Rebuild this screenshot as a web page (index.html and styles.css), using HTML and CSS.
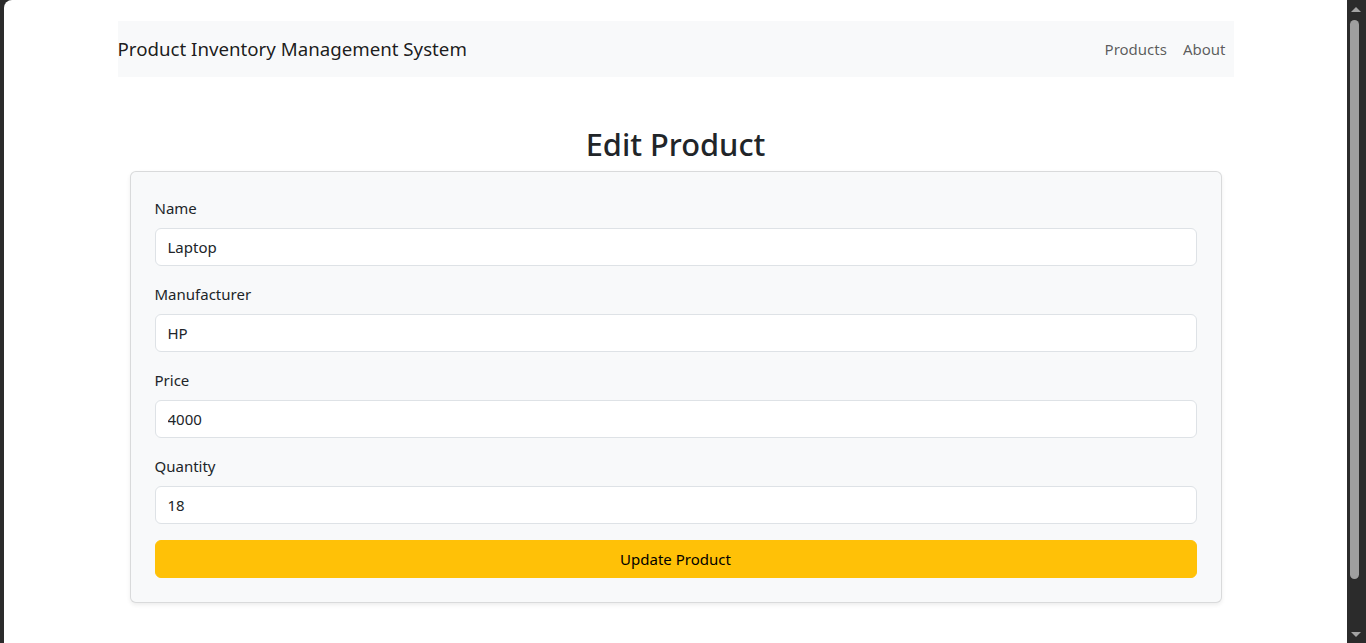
FILE: index.html
```html
<!DOCTYPE html>
<html lang="en">
<head>
<meta charset="utf-8">
<title>Edit Product</title>
<link rel="stylesheet" href="styles.css">
</head>
<body>
<div class="frame-left"></div>
<main class="viewport">
  <div class="container">
    <nav class="navbar">
      <a class="brand" href="#">Product Inventory Management System</a>
      <ul class="nav">
        <li><a class="nav-link" href="#">Products</a></li>
        <li><a class="nav-link" href="#">About</a></li>
      </ul>
    </nav>
    <h2 class="title">Edit Product</h2>
    <form class="card">
      <div class="group">
        <label class="label" for="name">Name</label>
        <input class="input" id="name" type="text" value="Laptop">
      </div>
      <div class="group">
        <label class="label" for="manufacturer">Manufacturer</label>
        <input class="input" id="manufacturer" type="text" value="HP">
      </div>
      <div class="group">
        <label class="label" for="price">Price</label>
        <input class="input" id="price" type="text" value="4000">
      </div>
      <div class="group">
        <label class="label" for="quantity">Quantity</label>
        <input class="input" id="quantity" type="text" value="18">
      </div>
      <button class="btn" type="button">Update Product</button>
    </form>
  </div>
</main>
<div class="scrollbar">
  <div class="arrow-up"></div>
  <div class="track"><div class="thumb"></div></div>
  <div class="arrow-down"></div>
</div>
</body>
</html>
```
FILE: styles.css
```css
* { box-sizing: border-box; }
html, body { height: 100%; }
body {
  margin: 0;
  display: flex;
  background: #2b2b2b;
  font-family: "Noto Sans", "Open Sans", sans-serif;
  font-size: 15px;
  line-height: 24px;
  color: #212529;
  overflow: hidden;
}
.frame-left { width: 4px; flex: none; background: #2b2b2b; }
.viewport {
  flex: 1;
  background: #fff;
  border-top-left-radius: 8px;
  min-width: 0;
}
.container {
  max-width: 1140px;
  margin: 0 auto;
  padding: 21px 12px 0;
}
.navbar {
  height: 56px;
  background: #f8f9fa;
  display: flex;
  align-items: center;
  justify-content: space-between;
}
.brand {
  font-size: 18.7px;
  color: rgba(0,0,0,.9);
  text-decoration: none;
  line-height: 30px;
}
.nav { list-style: none; margin: 0; padding: 0; display: flex; }
.nav-link {
  display: block;
  padding: 8px;
  color: rgba(0,0,0,.65);
  text-decoration: none;
}
.title {
  margin: 48px 0 8px;
  text-align: center;
  font-size: 30.8px;
  font-weight: 500;
  line-height: 38.4px;
}
.card {
  margin: 0 12px;
  padding: 24px;
  background: #f8f9fa;
  border: 1px solid rgba(0,0,0,.12);
  border-radius: 6px;
  box-shadow: 0 2px 4px rgba(0,0,0,.075);
}
.group { margin-bottom: 16px; }
.label { display: block; margin-bottom: 8px; }
.input {
  display: block;
  width: 100%;
  height: 38px;
  padding: 6px 12px;
  font: inherit;
  color: #212529;
  background: #fff;
  border: 1px solid #dee2e6;
  border-radius: 6px;
}
.btn {
  display: block;
  width: 100%;
  height: 38px;
  font: inherit;
  color: #000;
  background: #ffc107;
  border: 1px solid #ffc107;
  border-radius: 6px;
}
.scrollbar {
  width: 19px;
  flex: none;
  background: #2b2b2b;
  display: flex;
  flex-direction: column;
  align-items: center;
  padding: 7px 0 6px 3px;
}
.arrow-up, .arrow-down {
  width: 0; height: 0;
  border-left: 5px solid transparent;
  border-right: 5px solid transparent;
  margin-right: 4px;
}
.arrow-up { border-bottom: 5px solid #a3a3a3; }
.arrow-down { border-top: 5px solid #a3a3a3; }
.track { flex: 1; width: 100%; padding: 8px 0 53px; display: flex; }
.thumb { width: 9px; background: #9f9f9f; border-radius: 5px; }
```
